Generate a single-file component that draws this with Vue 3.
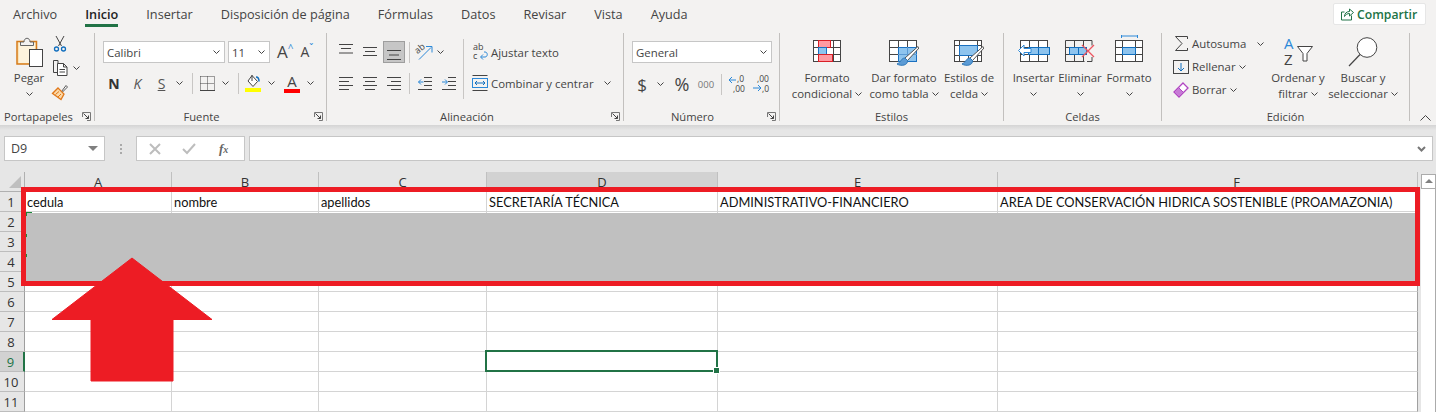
<template>
  <div class="excel">
    <!-- shared icon shapes -->
    <svg class="defs" xmlns="http://www.w3.org/2000/svg">
      <symbol id="chev" viewBox="0 0 7 4"><path d="M.5 .5l3 3 3-3" fill="none" stroke="#444" /></symbol>
      <symbol id="launch" viewBox="0 0 9 9">
        <path d="M.5 5V.5H8.500V8.500H5" fill="none" stroke="#777" />
        <path d="M1.500 1.500l5 5M6.500 3.500v3h-3" fill="none" stroke="#444" />
      </symbol>
      <symbol id="brush" viewBox="0 0 30 26">
        <path d="M29 6.500l1 1.500-11.500 12.500-2.500-2.500z" fill="#fff" stroke="#555" />
        <path d="M16 18c-4 0-3.500 4-8 6 4 2.500 11 1.500 10.500-3.500z" fill="#5b9bd5" stroke="#2f78b8" />
      </symbol>
      <symbol id="i-cond" viewBox="0 0 28 22">
        <rect x=".5" y=".5" width="27" height="21" fill="#fff" stroke="#444" />
        <path d="M5.500 0v22M13.500 0v22M20.500 0v22M0 7.500h28M0 14.500h28" stroke="#444" fill="none" />
        <rect x="5.500" y=".5" width="12" height="7" fill="#ff9aa2" stroke="#d81f26" />
        <rect x="5.500" y="7.500" width="8" height="7" fill="#8ec4ee" stroke="#1a70c0" />
        <rect x="5.500" y="14.500" width="14" height="7" fill="#ff9aa2" stroke="#d81f26" />
      </symbol>
      <symbol id="i-table" viewBox="0 0 30 26">
        <rect x=".5" y=".5" width="27" height="21" fill="#fff" stroke="#444" />
        <path d="M9.500 0v22M18.500 0v22M0 7.500h28M0 14.500h28" stroke="#444" fill="none" />
        <rect x="9.500" y="7.500" width="18" height="14" fill="#8ec4ee" stroke="#1a70c0" />
        <path d="M18.500 7v15M9 14.500h19" stroke="#5a9ad4" fill="none" />
        <use href="#brush" width="30" height="26" />
      </symbol>
      <symbol id="i-cell" viewBox="0 0 30 26">
        <rect x=".5" y=".5" width="27" height="21" fill="#fff" stroke="#444" />
        <path d="M5.500 0v22M23.500 0v22M0 5.500h28M0 15.500h28M14.500 15v7" stroke="#444" fill="none" />
        <rect x="5.500" y="5.500" width="18" height="10" fill="#8ec4ee" stroke="#1a70c0" />
        <use href="#brush" width="30" height="26" />
      </symbol>
      <symbol id="i-insert" viewBox="0 0 32 22">
        <rect x="2.500" y=".5" width="27" height="21" fill="#fff" stroke="#444" />
        <path d="M11.500 0v22M20.500 0v22M2 7.500h28M2 14.500h28" stroke="#444" fill="none" />
        <rect x="10.500" y="7.500" width="21" height="7" fill="#8ec4ee" stroke="#106ebe" />
        <path d="M20.500 7v8" stroke="#106ebe" />
        <path d="M.5 10.500L6 5v3.500h7v4H6V16z" fill="#fff" stroke="#2b88d8" />
      </symbol>
      <symbol id="i-delete" viewBox="0 0 30 22">
        <path d="M.5 .5h26.500v5M.5 .5v21h19M27 17v4.500h-5M9.500 0v22M18.500 0v6M18.500 16v6M0 7.500h4M0 14.500h4" stroke="#444" fill="none" />
        <rect x="4.500" y="7.500" width="17" height="7" fill="#8ec4ee" stroke="#106ebe" />
        <path d="M13.500 7v8" stroke="#106ebe" />
        <path d="M17 5l12 12M29 5L17 17" stroke="#ee5560" stroke-width="1.300" fill="none" />
      </symbol>
      <symbol id="i-format" viewBox="0 0 30 28">
        <path d="M7.500 1h16M7.500 0v3M23.500 0v3" stroke="#2b88d8" fill="none" />
        <rect x="1.500" y="5.500" width="27" height="21" fill="#fff" stroke="#444" />
        <path d="M8.500 5v22M21.500 5v22M1 12.500h28M1 19.500h28" stroke="#444" fill="none" />
        <rect x="8.500" y="12.500" width="13" height="7" fill="#8ec4ee" stroke="#106ebe" />
      </symbol>
    </svg>

    <header class="tabs">
      <span v-for="t in tabs" :key="t" class="tab" :class="{ active: t === 'Inicio' }">{{ t }}</span>
      <button class="share">
        <svg width="14" height="14" viewBox="0 0 14 14" fill="none" stroke="#217346">
          <path d="M11.500 8.500v4.500h-10V5h3" />
          <path d="M4.500 9.500c0-3 2-5 5-5V2l4 3.500-4 3.500V6.500c-2 0-4 1-5 3z" />
        </svg>
        Compartir
      </button>
    </header>

    <section class="ribbon">
      <!-- Portapapeles -->
      <div class="group g-clip">
        <div class="body clip-body">
          <div class="paste">
            <svg width="27" height="30" viewBox="0 0 27 30">
              <rect x="1" y="4.500" width="19.500" height="22.500" fill="#fbe5b8" stroke="#d67b1a" stroke-width="1.500" />
              <rect x="3" y="6" width="16" height="20" fill="#fdf3dd" />
              <path d="M4.500 8.500V5H8c0-5 6-5 6 0h3.500v3.500z" fill="#f3f2f1" stroke="#666" />
              <rect x="13.500" y="12.500" width="13" height="17" fill="#fff" stroke="#444" />
            </svg>
            <span class="paste-label">Pegar</span>
            <svg class="chev paste-chev" width="7" height="4"><use href="#chev" /></svg>
          </div>
          <div class="clip-tools">
            <svg class="scissors" width="12" height="16" viewBox="0 0 12 16" fill="none">
              <path d="M2 0l5.500 10M10 0L4.500 10" stroke="#444" />
              <circle cx="2.500" cy="13" r="2" stroke="#106ebe" stroke-width="1.300" />
              <circle cx="9.500" cy="13" r="2" stroke="#106ebe" stroke-width="1.300" />
            </svg>
            <div class="copy-row">
              <svg width="16" height="16" viewBox="0 0 16 16" fill="none" stroke="#444">
                <path d="M6 3.500V.5H1.500v12H5" />
                <path d="M5.500 3.500h6l3.500 3.500v8.500H5.500zM11.500 3.500V7H15M7.500 9.500h5.500M7.500 12h5.500" fill="#fff" />
              </svg>
              <svg class="chev" width="7" height="4"><use href="#chev" /></svg>
            </div>
            <svg width="16" height="16" viewBox="0 0 16 16">
              <path d="M9.500 7.500l4.500-6 1.500 1.500-5 5z" fill="#fff" stroke="#555" />
              <path d="M6 4l6 6-3 5.500L.500 9.500z" fill="#fbd9a8" stroke="#e0781a" stroke-width="1.300" />
              <path d="M3.500 10.500l3.500-3M6 13l3-3" stroke="#e0781a" fill="none" />
            </svg>
          </div>
        </div>
        <span class="g-label">Portapapeles</span>
        <svg class="launcher" width="9" height="9"><use href="#launch" /></svg>
      </div>

      <!-- Fuente -->
      <div class="group g-font">
        <div class="body rows">
          <div class="font-top">
            <div class="combo font-name">Calibri <svg class="chev" width="7" height="4"><use href="#chev" /></svg></div>
            <div class="combo font-size">11 <svg class="chev" width="7" height="4"><use href="#chev" /></svg></div>
            <span class="grow-a">A<sup>^</sup></span>
            <span class="shrink-a">A<sup>ˇ</sup></span>
          </div>
          <div class="font-bottom">
            <b class="bold">N</b>
            <i class="ital">K</i>
            <u class="under">S</u>
            <svg class="chev" width="7" height="4"><use href="#chev" /></svg>
            <span class="sep"></span>
            <svg width="15" height="15" viewBox="0 0 15 15" fill="none" stroke="#444">
              <path d="M.5 .5h14M.5 .5v14M14.500 .5v14M7.500 .5v14M.5 7.500h14" stroke-dasharray="1 1" />
              <path d="M0 14.500h15" />
            </svg>
            <svg class="chev" width="7" height="4"><use href="#chev" /></svg>
            <span class="sep"></span>
            <svg width="16" height="18" viewBox="0 0 16 18">
              <path d="M7 1.500l5.500 6-4.500 5-5-5.500z" fill="#fff" stroke="#444" />
              <path d="M7 1v6" stroke="#444" />
              <path d="M11 3c2 0 3 2 3 4.500" stroke="#106ebe" fill="none" stroke-width="1.500" />
              <rect y="14" width="16" height="4" fill="#ffff00" />
            </svg>
            <svg class="chev" width="7" height="4"><use href="#chev" /></svg>
            <span class="color-a">A</span>
            <svg class="chev" width="7" height="4"><use href="#chev" /></svg>
          </div>
        </div>
        <span class="g-label">Fuente</span>
        <svg class="launcher" width="9" height="9"><use href="#launch" /></svg>
      </div>

      <!-- Alineacion -->
      <div class="group g-align">
        <div class="body align-body">
          <div class="rows align-left">
            <div class="align-top">
              <svg width="14" height="22" fill="none" stroke="#444"><path d="M0 3.500h14M2 7.500h10M0 12h14" /></svg>
              <svg width="14" height="22" fill="none" stroke="#444"><path d="M0 6.500h14M2 10.500h10M0 14.500h14" /></svg>
              <span class="on">
                <svg width="14" height="20" fill="none" stroke="#444"><path d="M0 8.500h14M2 13h10M0 17.500h14" /></svg>
              </span>
              <span class="sep"></span>
              <svg width="18" height="18" viewBox="0 0 18 18">
                <text x="1" y="9" class="tiny" transform="rotate(-40 5 8)">ab</text>
                <path d="M4 16.500L16 4.500M11 3.500h6v6" fill="none" stroke="#2b88d8" />
              </svg>
              <svg class="chev" width="7" height="4"><use href="#chev" /></svg>
            </div>
            <div class="align-bottom">
              <svg width="14" height="14" fill="none" stroke="#444"><path d="M0 1.500h14M0 5.500h10M0 9.500h14M0 13.500h10" /></svg>
              <svg width="14" height="14" fill="none" stroke="#444"><path d="M0 1.500h14M2 5.500h10M0 9.500h14M2 13.500h10" /></svg>
              <svg width="14" height="14" fill="none" stroke="#444"><path d="M0 1.500h14M4 5.500h10M0 9.500h14M4 13.500h10" /></svg>
              <span class="sep"></span>
              <svg width="14" height="14" fill="none"><path d="M6 1.500h8M6 5.500h8M6 9.500h8M0 13.500h14" stroke="#444" /><path d="M.5 6h5M3 3.500L.5 6 3 8.500" stroke="#2b88d8" /></svg>
              <svg width="14" height="14" fill="none"><path d="M6 1.500h8M6 5.500h8M6 9.500h8M0 13.500h14" stroke="#444" /><path d="M0 6h5M3 3.500L5.500 6 3 8.500" stroke="#2b88d8" /></svg>
            </div>
          </div>
          <div class="rows align-right">
            <div class="wide-row">
              <span class="wide-icon">
                <svg width="15" height="18" viewBox="0 0 15 18" fill="none">
                  <text x="0" y="7" class="tiny">ab</text>
                  <text x="0" y="16" class="tiny">c</text>
                  <path d="M8 14h4c3 0 3-5 0-5h-1M10 11.500L7.500 14l2.500 2.500" stroke="#2b88d8" />
                </svg>
              </span>
              Ajustar texto
            </div>
            <div class="wide-row">
              <span class="wide-icon">
                <svg width="16" height="16" viewBox="0 0 16 16" fill="none">
                  <path d="M.5 .5h15M.5 15.500h15" stroke="#444" />
                  <rect x=".5" y="3.500" width="15" height="9" stroke="#2b88d8" />
                  <path d="M3 8h10M5 6L3 8l2 2M11 6l2 2-2 2" stroke="#106ebe" />
                </svg>
              </span>
              Combinar y centrar
              <svg class="chev wide-chev" width="7" height="4"><use href="#chev" /></svg>
            </div>
          </div>
        </div>
        <span class="g-label">Alineación</span>
        <svg class="launcher" width="9" height="9"><use href="#launch" /></svg>
      </div>

      <!-- Numero -->
      <div class="group g-num">
        <div class="body rows">
          <div class="combo num-combo">General <svg class="chev" width="7" height="4"><use href="#chev" /></svg></div>
          <div class="num-row">
            <span class="dollar">$</span>
            <svg class="chev" width="7" height="4"><use href="#chev" /></svg>
            <span class="percent">%</span>
            <span class="thousand">000</span>
            <span class="sep"></span>
            <svg width="17" height="18" viewBox="0 0 17 18" fill="none">
              <text x="8" y="7" class="dec">,0</text>
              <text x="4" y="17" class="dec">,00</text>
              <path d="M0 5h7M3 2L0 5l3 3" stroke="#2b88d8" />
            </svg>
            <svg width="17" height="18" viewBox="0 0 17 18" fill="none">
              <text x="4" y="7" class="dec">,00</text>
              <text x="9" y="17" class="dec">,0</text>
              <path d="M0 13h8M5 10l3 3-3 3" stroke="#2b88d8" />
            </svg>
          </div>
        </div>
        <span class="g-label">Número</span>
        <svg class="launcher" width="9" height="9"><use href="#launch" /></svg>
      </div>

      <!-- Estilos -->
      <div class="group g-styles">
        <div class="body tiles">
          <div v-for="t in styleTiles" :key="t.icon" class="tile">
            <svg class="tile-icon" :width="t.w" :height="t.h"><use :href="'#' + t.icon" :width="t.w" :height="t.h" /></svg>
            <span>{{ t.top }}</span>
            <span>{{ t.bottom }} <svg class="chev" width="7" height="4"><use href="#chev" /></svg></span>
          </div>
        </div>
        <span class="g-label">Estilos</span>
      </div>

      <!-- Celdas -->
      <div class="group g-cells">
        <div class="body tiles">
          <div v-for="t in cellTiles" :key="t.icon" class="tile" :class="t.cls">
            <svg class="tile-icon" :width="t.w" :height="t.h"><use :href="'#' + t.icon" :width="t.w" :height="t.h" /></svg>
            <span>{{ t.top }}</span>
            <svg class="chev tile-chev" width="7" height="4"><use href="#chev" /></svg>
          </div>
        </div>
        <span class="g-label">Celdas</span>
      </div>

      <!-- Edicion -->
      <div class="group g-edit">
        <div class="body edit-body">
          <div class="edit-list">
            <div class="edit-row">
              <span class="edit-icon">
                <svg width="13" height="15" fill="none" stroke="#444"><path d="M12.500 3V.5H.5L7 7.500.5 14.500h12V12" /></svg>
              </span>
              Autosuma
              <svg class="chev auto-chev" width="7" height="4"><use href="#chev" /></svg>
            </div>
            <div class="edit-row">
              <span class="edit-icon">
                <svg width="16" height="14" fill="none"><rect x=".5" y=".5" width="15" height="13" stroke="#444" /><path d="M8 3v8M5 8l3 3 3-3" stroke="#106ebe" /></svg>
              </span>
              Rellenar
              <svg class="chev" width="7" height="4"><use href="#chev" /></svg>
            </div>
            <div class="edit-row">
              <span class="edit-icon">
                <svg width="16" height="16" viewBox="0 0 16 16">
                  <path d="M10 1l5 5-9 9-5-5z" fill="#fff" stroke="#b146c2" stroke-width="1.300" />
                  <path d="M5.500 5.500l5 5-4.500 4.500-5-5z" fill="#c77bd6" stroke="#b146c2" />
                </svg>
              </span>
              Borrar
              <svg class="chev" width="7" height="4"><use href="#chev" /></svg>
            </div>
          </div>
          <div class="tile edit-tile">
            <svg class="tile-icon" width="29" height="28" viewBox="0 0 29 28">
              <text x="0" y="11" class="sort-a">A</text>
              <text x="0" y="27" class="sort-z">Z</text>
              <path d="M13.500 8.500h15l-5.500 7v7.500h-4v-7.500z" fill="#fff" stroke="#444" />
            </svg>
            <span>Ordenar y</span>
            <span>filtrar <svg class="chev" width="7" height="4"><use href="#chev" /></svg></span>
          </div>
          <div class="tile edit-tile">
            <svg class="tile-icon" width="30" height="30" viewBox="0 0 30 30" fill="none" stroke="#444">
              <circle cx="19" cy="10.500" r="9.800" fill="#fff" />
              <path d="M12 17.500L1 29" stroke-width="1.200" />
            </svg>
            <span>Buscar y</span>
            <span>seleccionar <svg class="chev" width="7" height="4"><use href="#chev" /></svg></span>
          </div>
        </div>
        <span class="g-label">Edición</span>
      </div>

      <svg class="collapse" width="11" height="6" fill="none" stroke="#444"><path d="M.5 5.500l5-5 5 5" /></svg>
    </section>
    <div class="ribbon-shadow"></div>

    <section class="formula">
      <div class="name-box">D9 <span class="down"></span></div>
      <span class="dots"></span>
      <div class="fx-box">
        <svg width="12" height="12" fill="none" stroke="#bdbdbd" stroke-width="2"><path d="M1 1l10 10M11 1L1 11" /></svg>
        <svg width="14" height="12" fill="none" stroke="#bdbdbd" stroke-width="2"><path d="M1 6l4 4 8-9" /></svg>
        <span class="fx">f<small>x</small></span>
      </div>
      <div class="fx-input">
        <svg width="9" height="6" fill="none" stroke="#777" stroke-width="2"><path d="M1 1l3.500 3.500L8 1" /></svg>
      </div>
    </section>

    <section class="sheet">
      <div class="grid">
        <div class="corner"><span class="corner-mark"></span></div>
        <div v-for="c in columns" :key="c" class="col-head" :class="{ picked: c === 'D', long: c === 'F' }">{{ c }}</div>
        <template v-for="r in rows" :key="r">
          <div class="row-head" :class="{ picked: r === 9 }">{{ r }}</div>
          <div v-for="c in columns" :key="c" class="cell">{{ r === 1 ? headers[c] : '' }}</div>
        </template>

        <!-- active cell D9 -->
        <div class="active-cell"><span class="handle"></span></div>
        <!-- annotation drawn on top of the sheet -->
        <div class="frame">
          <span class="copy-mark first"></span>
          <span class="copy-mark second"></span>
          <span class="copy-mark third"></span>
          <div class="band"></div>
        </div>
        <svg class="arrow" width="162" height="125" viewBox="0 0 162 125">
          <path d="M81 1L161 62.500H122V124H40V62.500H1z" fill="#ed1c24" stroke="#ed1c24" stroke-linejoin="round" />
        </svg>
      </div>
      <div class="scroll">
        <div class="scroll-up"></div>
      </div>
    </section>
  </div>
</template>

<script setup>
const tabs = ['Archivo', 'Inicio', 'Insertar', 'Disposición de página', 'Fórmulas', 'Datos', 'Revisar', 'Vista', 'Ayuda']

const styleTiles = [
  { icon: 'i-cond', w: 28, h: 22, top: 'Formato', bottom: 'condicional' },
  { icon: 'i-table', w: 30, h: 26, top: 'Dar formato', bottom: 'como tabla' },
  { icon: 'i-cell', w: 30, h: 26, top: 'Estilos de', bottom: 'celda' },
]

const cellTiles = [
  { icon: 'i-insert', w: 32, h: 22, top: 'Insertar' },
  { icon: 'i-delete', w: 30, h: 22, top: 'Eliminar' },
  { icon: 'i-format', w: 30, h: 28, top: 'Formato', cls: 'tall' },
]

const columns = ['A', 'B', 'C', 'D', 'E', 'F']
const rows = [1, 2, 3, 4, 5, 6, 7, 8, 9, 10, 11]
const headers = {
  A: 'cedula',
  B: 'nombre',
  C: 'apellidos',
  D: 'SECRETARÍA TÉCNICA',
  E: 'ADMINISTRATIVO-FINANCIERO',
  F: 'AREA DE CONSERVACIÓN HIDRICA SOSTENIBLE (PROAMAZONIA)',
}
</script>

<style>
html, body {
  overflow: hidden;
  background: #e6e6e6;
}
</style>

<style scoped>
.excel {
  width: 1436px;
  height: 412px;
  overflow: hidden;
  display: flex;
  flex-direction: column;
  font-family: "Open Sans", "Noto Sans", sans-serif;
  font-size: 11.400px;
  color: #444;
  background: #e6e6e6;
}

.defs {
  width: 0;
  height: 0;
  position: absolute;
}

svg {
  display: block;
  flex: none;
  overflow: visible;
}

.tabs {
  height: 33px;
  flex: none;
  display: flex;
  align-items: flex-start;
  background: #f3f2f1;
}

.tab {
  height: 24px;
  line-height: 29px;
  margin: 0 14px;
  font-size: 12.700px;
  white-space: nowrap;
}

.tab:first-child {
  margin-left: 13px;
}

.tab.active {
  color: #222;
  font-weight: 600;
  border-bottom: 3px solid #217346;
}

.share {
  margin: 3px 10px 0 auto;
  width: 93px;
  height: 22px;
  display: flex;
  align-items: center;
  gap: 3px;
  padding: 0 0 0 6px;
  background: #fff;
  border: 1px solid #e6e6e6;
  border-radius: 2px;
  color: #217346;
  font: 600 12.200px "Open Sans", sans-serif;
}

.ribbon {
  height: 92px;
  flex: none;
  display: flex;
  align-items: flex-start;
  background: #f3f2f1;
}

.ribbon-shadow {
  height: 5px;
  flex: none;
  background: linear-gradient(#d4d4d4, #e6e6e6);
}

.group {
  position: relative;
  height: 88px;
  display: flex;
  flex-direction: column;
  flex: none;
  border-right: 1px solid #c2c0be;
  box-sizing: border-box;
}

.g-clip { width: 95px; }
.g-font { width: 232px; }
.g-align { width: 297px; }
.g-num { width: 156px; }
.g-styles { width: 224px; }
.g-cells { width: 158px; }
.g-edit { width: 248px; }

.body {
  height: 76px;
  flex: none;
}

.g-label {
  height: 12px;
  line-height: 16px;
  text-align: center;
  font-size: 11.200px;
}

.g-clip .g-label {
  width: 77px;
}

.g-font .g-label,
.g-num .g-label {
  padding-right: 18px;
}

.g-align .g-label {
  padding-right: 16px;
}

.launcher {
  position: absolute;
  right: 3px;
  bottom: 0;
}

.chev {
  display: inline-block;
}

.sep {
  width: 1px;
  height: 21px;
  background: #c8c6c4;
}

.rows {
  display: flex;
  flex-direction: column;
  gap: 9px;
  padding-top: 8px;
  box-sizing: border-box;
}

.combo {
  height: 22px;
  box-sizing: border-box;
  display: flex;
  align-items: center;
  justify-content: space-between;
  padding: 0 4px 0 3px;
  background: #fff;
  border: 1px solid #c6c6c6;
}

/* Portapapeles */
.clip-body {
  display: flex;
  padding-left: 8px;
}

.paste {
  width: 41px;
  display: flex;
  flex-direction: column;
  align-items: center;
  padding-top: 4px;
  padding-left: 1px;
  box-sizing: border-box;
}

.paste-label {
  line-height: 16px;
  margin-top: 3px;
}

.paste-chev {
  margin-top: 6px;
}

.clip-tools {
  display: flex;
  flex-direction: column;
  padding: 3px 0 0 3px;
  gap: 8px;
}

.scissors {
  margin-left: 2px;
}

.copy-row {
  display: flex;
  align-items: center;
  gap: 5px;
}

/* Fuente */
.g-font .rows {
  padding-left: 8px;
}

.font-top {
  display: flex;
  align-items: center;
  height: 22px;
}

.font-name {
  width: 122px;
}

.font-size {
  width: 42px;
  margin-left: 3px;
}

.grow-a,
.shrink-a {
  display: flex;
  font-size: 17px;
  line-height: 22px;
}

.grow-a {
  margin-left: 7px;
}

.shrink-a {
  margin-left: 7px;
  font-size: 14px;
}

.grow-a sup,
.shrink-a sup {
  font-size: 10px;
  line-height: 14px;
  color: #2b88d8;
}

.font-bottom {
  display: grid;
  height: 22px;
  grid-template-columns: 22px 25px 23px 12px 14px 17px 18px 8px 22px 14px 28px 8px;
  align-items: center;
  justify-items: center;
}

.bold {
  font-size: 14px;
  color: #333;
}

.ital,
.under {
  font-size: 14px;
  color: #555;
}

.color-a {
  font-size: 15px;
  line-height: 15px;
  padding: 0 2px;
  border-bottom: 4px solid #ff0000;
  width: 12px;
  text-align: center;
}

/* Alineacion */
.align-body {
  display: flex;
}

.align-left {
  width: 137px;
  padding-left: 7px;
  border-right: 1px solid #c8c6c4;
  height: 60px;
  margin-top: 6px;
  padding-top: 2px;
}

.align-top,
.align-bottom {
  display: grid;
  height: 22px;
  grid-template-columns: 24px 24px 24px 6px 24px 8px;
  align-items: center;
  justify-items: center;
}

.align-bottom {
  grid-template-columns: 24px 24px 24px 6px 25px 24px;
}

.on {
  width: 22px;
  height: 22px;
  display: flex;
  justify-content: center;
  background: #c6c6c6;
  border: 1px solid #9e9e9e;
  box-sizing: border-box;
}

.tiny {
  font: 9px "Open Sans", sans-serif;
  fill: #444;
}

.align-right {
  padding-left: 5px;
}

.wide-row {
  height: 22px;
  display: flex;
  align-items: center;
  white-space: nowrap;
}

.wide-icon {
  width: 22px;
  flex: none;
  display: flex;
  justify-content: center;
}

.wide-chev {
  margin-left: 10px;
}

/* Numero */
.g-num .rows {
  padding-left: 8px;
}

.num-combo {
  width: 140px;
}

.num-row {
  display: grid;
  height: 22px;
  grid-template-columns: 20px 16px 28px 20px 10px 23px 24px;
  align-items: center;
  justify-items: center;
}

.dollar {
  font-size: 17px;
}

.percent {
  font-size: 18px;
}

.thousand {
  font-size: 9.500px;
  color: #777;
}

.dec {
  font: 8.500px "Open Sans", sans-serif;
  fill: #444;
}

/* tiles shared by Estilos, Celdas, Edicion */
.tiles {
  display: grid;
}

.g-styles .tiles {
  grid-template-columns: 80px 74px 56px;
  padding-left: 7px;
}

.g-cells .tiles {
  grid-template-columns: 47px 46px 52px;
  padding-left: 6px;
}

.tile {
  display: flex;
  flex-direction: column;
  align-items: center;
  line-height: 16px;
  white-space: nowrap;
  padding-top: 7px;
  box-sizing: border-box;
}

.tile-icon {
  height: 26px;
  margin-bottom: 4px;
}

.tile span {
  display: flex;
  align-items: center;
  gap: 3px;
}

.tile-chev {
  margin-top: 6px;
}

.tall {
  padding-top: 2px;
}

.tall .tile-icon {
  height: 28px;
  margin-bottom: 7px;
}

/* Edicion */
.edit-body {
  display: flex;
  padding-left: 11px;
}

.edit-list {
  width: 95px;
  flex: none;
  margin-top: -1px;
}

.edit-row {
  height: 23px;
  display: flex;
  align-items: center;
  gap: 3px;
  white-space: nowrap;
}

.edit-icon {
  width: 16px;
  display: flex;
  justify-content: center;
}

.auto-chev {
  margin-left: 8px;
}

.edit-tile {
  width: 60px;
  padding-top: 4px;
}

.edit-tile + .edit-tile {
  width: 70px;
}

.edit-tile .tile-icon {
  height: 30px;
  margin-bottom: 3px;
}

.sort-a {
  font: 15px "Open Sans", sans-serif;
  fill: #2b88d8;
}

.sort-z {
  font: 15px "Open Sans", sans-serif;
  fill: #444;
}

.collapse {
  margin: 82px 0 0 10px;
}

/* formula bar */
.formula {
  height: 42px;
  flex: none;
  display: flex;
  align-items: flex-start;
  padding: 6px 3px 0 4px;
  box-sizing: border-box;
}

.name-box,
.fx-box,
.fx-input {
  height: 25px;
  box-sizing: border-box;
  background: #fff;
  border: 1px solid #c6c6c6;
  display: flex;
  align-items: center;
}

.name-box {
  width: 101px;
  justify-content: space-between;
  padding: 0 6px;
  font-size: 12.500px;
}

.down {
  border: 5px solid transparent;
  border-top: 5px solid #808080;
  border-bottom: 0;
}

.dots {
  width: 2px;
  height: 10px;
  margin: 8px 14px 0 15px;
  background: repeating-linear-gradient(#aaa 0 2px, transparent 2px 4px);
}

.fx-box {
  width: 109px;
  padding: 0 12px;
  gap: 21px;
  margin-right: 4px;
}

.fx {
  font: italic bold 13px "Liberation Serif", serif;
  color: #666;
  margin-left: 2px;
}

.fx small {
  font-size: 10px;
}

.fx-input {
  flex: 1;
  justify-content: flex-end;
  padding-right: 6px;
}

/* sheet */
.sheet {
  flex: 1;
  display: flex;
  gap: 3px;
  min-height: 0;
}

.grid {
  position: relative;
  display: grid;
  grid-template-columns: 25px 147px 147px 168px 231px 280px 420px;
  grid-auto-rows: 20px;
  width: 1418px;
}

.corner {
  position: relative;
  border-right: 1px solid #b0b0b0;
  border-bottom: 1px solid #b0b0b0;
  box-sizing: border-box;
}

.corner-mark {
  position: absolute;
  left: 9px;
  top: 4px;
  border-style: solid;
  border-width: 0 0 12px 12px;
  border-color: transparent transparent #bfbfbf transparent;
}

.col-head {
  display: flex;
  align-items: center;
  justify-content: center;
  font-size: 13px;
  color: #333;
  border-right: 1px solid #c0c0c0;
  border-bottom: 1px solid #ababab;
  box-sizing: border-box;
}

.col-head.picked {
  background: #d2d2d2;
}

/* column F runs on past the visible edge, so its letter sits right of centre */
.col-head.long {
  padding-left: 58px;
}

.row-head {
  display: flex;
  align-items: center;
  justify-content: center;
  font-size: 13px;
  color: #333;
  padding-right: 2px;
  border-right: 1px solid #9e9e9e;
  border-bottom: 1px solid #bdbdbd;
  box-sizing: border-box;
}

.row-head.picked {
  background: #d2d2d2;
  border-right: 2px solid #217346;
  color: #217346;
}

.cell {
  padding-left: 2px;
  background: #fff;
  border-right: 1px solid #d4d4d4;
  border-bottom: 1px solid #d4d4d4;
  box-sizing: border-box;
  font: 12.800px/20px Lato, "Liberation Sans", sans-serif;
  color: #111;
  white-space: nowrap;
  overflow: hidden;
}

.cell:nth-child(7n) {
  border-right-color: #a0a0a0;
}

.active-cell {
  position: absolute;
  left: 485px;
  top: 178px;
  width: 233px;
  height: 22px;
  box-sizing: border-box;
  border: 2px solid #217346;
}

.handle {
  position: absolute;
  right: -4px;
  bottom: -4px;
  width: 5px;
  height: 5px;
  background: #217346;
  border: 1px solid #fff;
}

.frame {
  position: absolute;
  left: 21px;
  top: 15px;
  width: 1399px;
  height: 99px;
  box-sizing: border-box;
  border: 5px solid #ed1c24;
  display: flex;
  flex-direction: column;
  justify-content: flex-end;
}

.band {
  height: 68px;
  background: #c0c0c0;
}

.copy-mark {
  position: absolute;
  left: 0;
  z-index: 1;
}

.copy-mark.first {
  top: 20px;
  width: 5px;
  height: 3px;
  border-top: 1px solid #1a8a3a;
  border-left: 1px solid #1a8a3a;
}

.copy-mark.second,
.copy-mark.third {
  width: 1px;
  height: 3px;
  background: #1a8a3a;
}

.copy-mark.second {
  top: 42px;
}

.copy-mark.third {
  top: 62px;
}

.arrow {
  position: absolute;
  left: 51px;
  top: 85px;
}

.scroll {
  width: 15px;
  margin-top: 2px;
  background: #fff;
  border-right: 1px solid #ababab;
  box-sizing: border-box;
}

.scroll-up {
  height: 15px;
  box-sizing: border-box;
  border: 1px solid #ababab;
  border-right: 0;
  position: relative;
}

.scroll-up::after {
  content: "";
  position: absolute;
  left: 3px;
  top: 4px;
  border: 4px solid transparent;
  border-bottom: 4px solid #808080;
  border-top: 0;
}
</style>
